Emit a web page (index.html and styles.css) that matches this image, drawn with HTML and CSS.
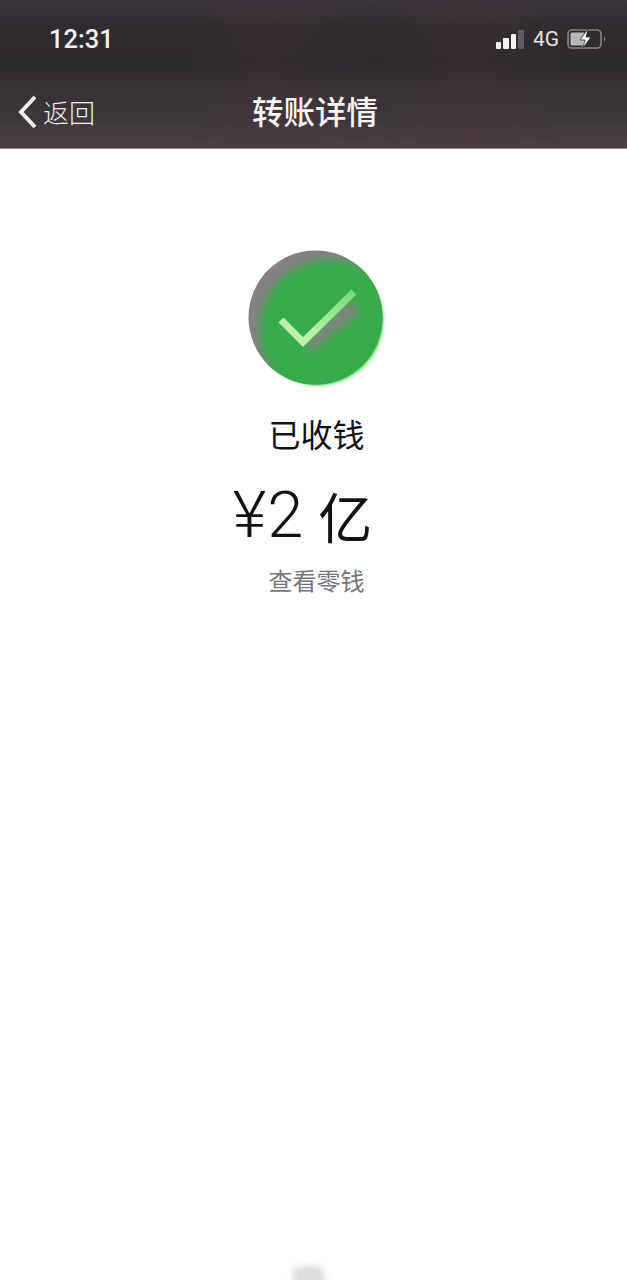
FILE: index.html
```html
<!DOCTYPE html>
<html lang="zh">
<head>
<meta charset="utf-8">
<title>转账详情</title>
<link rel="stylesheet" href="styles.css">
</head>
<body>
<div class="page">
  <header class="header">
    <div class="status">
      <span class="time">12:31</span>
      <div class="status-right">
        <div class="signal"><i class="b1"></i><i class="b2"></i><i class="b3"></i><i class="b4"></i></div>
        <span class="net">4G</span>
        <svg class="battery" width="40" height="22" viewBox="0 0 40 22">
          <rect x="1" y="2" width="33" height="18" rx="4" fill="none" stroke="#8b8788" stroke-width="1.6"/>
          <rect x="3.5" y="4.5" width="15" height="13" rx="1.5" fill="#b9b6b6"/>
          <path d="M37 8.5c1.5.5 1.5 4.500 0 5z" fill="#8b8788"/>
          <path d="M20 2 13 12h5l-2 8 8-11h-5l2-7z" fill="#fff" stroke="#2b282b" stroke-width=".8"/>
          <path d="M15 17l-1 3 3-2z" fill="#2e9c6a"/>
        </svg>
      </div>
    </div>
    <nav class="nav">
      <div class="back">
        <svg class="chevron" width="22" height="34" viewBox="0 0 22 34"><path d="M18 2 4 17l14 15" fill="none" stroke="#f2f0f0" stroke-width="4"/></svg>
        <span>返回</span>
      </div>
      <h1 class="title">转账详情</h1>
    </nav>
  </header>
  <main class="main">
    <svg class="check" width="140" height="140" viewBox="0 0 140 140">
      <defs>
        <filter id="soft" x="-20%" y="-20%" width="140%" height="140%"><feGaussianBlur stdDeviation="1.600"/></filter>
        <filter id="soft2" x="-30%" y="-30%" width="160%" height="160%"><feGaussianBlur stdDeviation="5"/></filter>
        <filter id="soft3" x="-30%" y="-30%" width="160%" height="160%"><feGaussianBlur stdDeviation="4"/></filter>
        <linearGradient id="tick" x1="0" y1="1" x2="1" y2="0">
          <stop offset="0" stop-color="#c4f5b6"/>
          <stop offset=".4" stop-color="#aef09f"/>
          <stop offset="1" stop-color="#76dc74"/>
        </linearGradient>
        <clipPath id="disc"><circle cx="67.500" cy="67.500" r="67"/></clipPath>
      </defs>
      <circle cx="70" cy="70" r="65.500" fill="#4fe85a" filter="url(#soft)"/>
      <g clip-path="url(#disc)">
        <circle cx="67.500" cy="67.500" r="68" fill="#858084"/>
        <circle cx="82" cy="80" r="70" fill="#35ac4a" filter="url(#soft3)"/>
        <path d="M58 92 104 50 112 62 62 103z" fill="#868185" filter="url(#soft2)"/>
      </g>
      <path d="M33 70 55 92 106 42" fill="none" stroke="url(#tick)" stroke-width="7"/>
    </svg>
    <p class="state">已收钱</p>
    <p class="amount"><span class="yen">¥2</span><span class="yi">亿</span></p>
    <p class="link">查看零钱</p>
  </main>
  <div class="smudge"></div>
</div>
</body>
</html>
```
FILE: styles.css
```css
* { box-sizing: border-box; }
html, body { margin: 0; padding: 0; background: #fff; }
.page {
  position: relative;
  width: 627px;
  height: 1280px;
  overflow: hidden;
  font-family: "Noto Sans CJK SC", "Liberation Sans", sans-serif;
}
.header {
  height: 149px;
  border-bottom: 1px solid #8d8a8c;
  background:
    linear-gradient(90deg, rgba(90, 50, 60, 0) 30%, rgba(90, 50, 60, .16) 42%, rgba(90, 50, 60, 0) 60%, rgba(90, 50, 60, .18) 75%, rgba(90, 50, 60, 0) 90%),
    linear-gradient(180deg, #3a343a 0%, #2f2b2f 18%, #2d2a2e 45%, #373236 62%, #3d373b 80%, #4a4146 100%);
  color: #f5f3f3;
}
.status {
  height: 78px;
  display: flex;
  align-items: center;
  justify-content: space-between;
  padding: 0 20px 0 49px;
}
.time {
  font-family: Roboto, "Liberation Sans", sans-serif;
  font-size: 25.500px;
  font-weight: 500;
  color: #f4f3f3;
}
.status-right { display: flex; align-items: center; }
.signal { display: flex; align-items: flex-end; gap: 2px; height: 20px; margin-right: 9px; }
.signal i { display: block; width: 5.500px; background: #f2f1f1; border-radius: 1px; }
.signal .b1 { height: 7px; }
.signal .b2 { height: 11px; }
.signal .b3 { height: 15px; }
.signal .b4 { height: 19px; background: #5f5c62; }
.net {
  font-family: Roboto, "Liberation Sans", sans-serif;
  font-size: 21px;
  color: #e4e2e2;
  margin-right: 8px;
}
.nav {
  position: relative;
  height: 70px;
  display: flex;
  align-items: center;
  justify-content: center;
}
.back {
  position: absolute;
  left: 17px;
  top: 15px;
  display: flex;
  align-items: center;
  gap: 4px;
  font-size: 26px;
  font-weight: 300;
  color: #f0eeee;
}
.title {
  margin: 0 0 6px 3px;
  font-size: 31.500px;
  font-weight: 500;
  color: #f7f5f5;
}
.main {
  display: flex;
  flex-direction: column;
  align-items: center;
  padding: 101px 0 0 6px;
  color: #121212;
}
.check { display: block; margin-left: 2px; }
.state { margin: 20px 0 0; font-size: 32px; line-height: 46px; font-weight: 400; }
.amount {
  display: flex;
  align-items: center;
  gap: 14px;
  margin: 19px 28px 0 0;
  height: 80px;
  white-space: nowrap;
}
.yen {
  font-family: Roboto, "Liberation Sans", sans-serif;
  font-size: 65px;
  font-weight: 300;
  letter-spacing: 1px;
}
.yi { font-size: 54px; font-weight: 400; }
.link { margin: 7px 0 0; font-size: 24px; line-height: 36px; color: #77757a; }
.smudge {
  position: absolute;
  left: 293px;
  top: 1266px;
  width: 32px;
  height: 18px;
  background: #dcdcdc;
  filter: blur(3px);
  border-radius: 8px 10px 0 0;
}
```
